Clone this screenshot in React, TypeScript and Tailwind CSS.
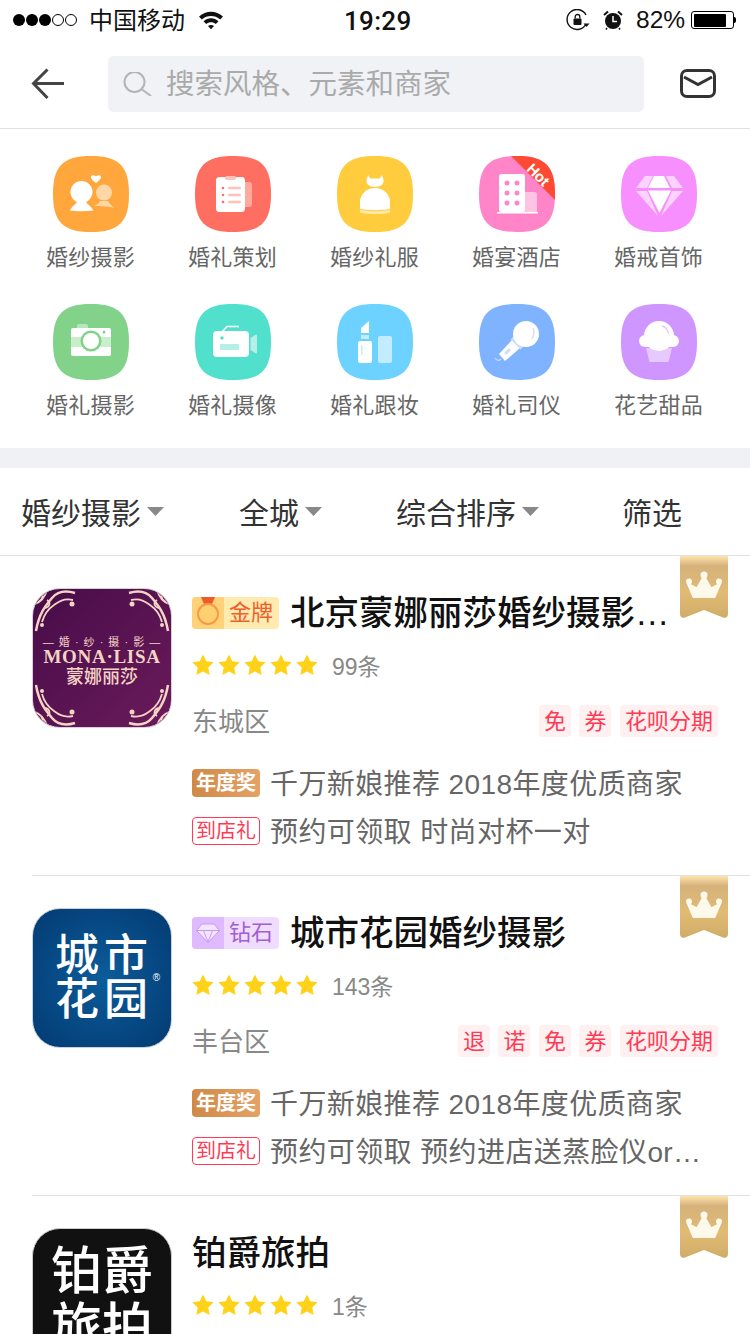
import React from "react";

const SQUIRCLE = "M38 0C66 0 76 10 76 38C76 66 66 76 38 76C10 76 0 66 0 38C0 10 10 0 38 0Z";

// Category icons
const IconShell = ({ color, children }: { color: string; children: React.ReactNode }) => (
  <svg width="76" height="76" viewBox="0 0 76 76">
    <path d={SQUIRCLE} fill={color} />
    {children}
  </svg>
);

const CoupleIcon = () => (
  <IconShell color="#ffa63d">
    <circle cx="28.5" cy="36" r="11" fill="#fff" />
    <path d="M17 54.500C19 50 23 48 25 45H32C34 48 38 50 40.500 54.500C33 55.500 24 55.500 17 54.500Z" fill="#fff" />
    <circle cx="51" cy="36.500" r="8" fill="#ffd7a6" />
    <path d="M41 50C44 49 46 47 47 45H55C56 47 58 49 61.500 52C56 50.500 50 50 41 50Z" fill="#ffd7a6" />
    <path d="M43 27C39 24 38 22.500 38 21C38 19 41 18.500 43 20.500C45 18.500 48 19 48 21C48 22.500 47 24 43 27Z" fill="#fff" />
  </IconShell>
);

const PlanIcon = () => (
  <IconShell color="#ff6f61">
    <rect x="40" y="26" width="17" height="25" rx="3" fill="#ffa99f" />
    <rect x="21" y="21" width="29" height="35" rx="3.500" fill="#fff" />
    <rect x="30" y="20" width="11" height="4" rx="2" fill="#ffc2bb" />
    {[32, 39, 46].map((y) => (
      <g key={y}>
        <circle cx="28" cy={y} r="1.300" fill="#ff6f61" />
        <rect x="33" y={y - 1.2} width="13" height="2.400" rx="1.200" fill="#ffc2bb" />
      </g>
    ))}
  </IconShell>
);

const DressIcon = () => (
  <IconShell color="#ffcc3d">
    <path d="M31 19L33.500 22.500H42.500L45 19L46.500 24C47 28 44 31 38 31C32 31 29 28 29.500 24Z" fill="#fff" />
    <path d="M23 53V46C23 38 30 32 38 32C46 32 53 38 53 46V53C45 54.500 31 54.500 23 53Z" fill="#fff" />
    <path d="M23 54C31 55.500 45 55.500 53 54V56.500C45 58.500 31 58.500 23 56.500Z" fill="#ffe9a8" />
  </IconShell>
);

const HotelIcon = () => (
  <IconShell color="#ff85c8">
    <path d="M44 36H55C57 36 58 37 58 39V56H44Z" fill="#ffc4e4" />
    <rect x="20" y="18" width="26" height="38" rx="2.500" fill="#fff" />
    {[27, 37, 47].map((y) => (
      <g key={y} fill="#ff85c8">
        <circle cx="28" cy={y} r="2.500" />
        <circle cx="38" cy={y} r="2.500" />
      </g>
    ))}
    <rect x="18" y="56" width="41" height="1.500" fill="#fff" />
    <clipPath id="hot-clip">
      <path d={SQUIRCLE} />
    </clipPath>
    <path d="M32 0H76V44Z" fill="#ff4a33" clipPath="url(#hot-clip)" />
    <text
      x="59"
      y="24"
      fill="#fff"
      fontSize="15"
      fontWeight="700"
      textAnchor="middle"
      transform="rotate(45 59 19)"
    >
      Hot
    </text>
  </IconShell>
);

const RingIcon = () => (
  <IconShell color="#f78fff">
    <path d="M33 20H43L49 32H27Z" fill="#fff" />
    <path d="M27 34.500H50L38.500 57Z" fill="#fff" />
    <path d="M15 32L24 20H32L26 32Z M62 32L53 20H45L51 32Z" fill="#fcd2ff" />
    <path d="M15 35H26L37 60Z M62 35H51L40 60Z" fill="#fcd2ff" />
  </IconShell>
);

const CameraIcon = () => (
  <IconShell color="#82d28a">
    <rect x="24" y="20" width="11" height="6" rx="2" fill="#b8e6bc" />
    <rect x="18" y="24" width="40" height="28" rx="2" fill="#fff" />
    <rect x="18" y="33" width="40" height="10" fill="#c9eecb" />
    <circle cx="38" cy="37" r="10.500" fill="#82d28a" />
    <circle cx="38" cy="37" r="8" fill="#fff" />
    <circle cx="51" cy="28" r="1.500" fill="#82d28a" />
  </IconShell>
);

const VideoIcon = () => (
  <IconShell color="#50e0cc">
    <path d="M27 28L32 22.500H44" stroke="#fff" strokeWidth="1.500" fill="none" />
    <rect x="18" y="27" width="36" height="26" rx="4" fill="#fff" />
    <path d="M55.500 34L61 30.500C61.500 30.500 62 31 62 31.500V48.500C62 49 61.500 49.500 61 49.500L55.500 46Z" fill="#b5f0e7" />
    <circle cx="27" cy="34" r="1.700" fill="#50e0cc" />
    <rect x="25" y="40" width="19" height="6" fill="#b5f0e7" />
  </IconShell>
);

const MakeupIcon = () => (
  <IconShell color="#6dd2ff">
    <path d="M24 24L32 17V29H24Z" fill="#fff" />
    <rect x="24" y="31" width="8" height="4" fill="#c4ecff" />
    <rect x="21" y="37" width="14" height="22" rx="2" fill="#fff" />
    <rect x="24" y="41" width="1.500" height="10" fill="#c4ecff" />
    <rect x="41" y="32" width="14" height="27" rx="2" fill="#c4ecff" />
  </IconShell>
);

const MicIcon = () => (
  <IconShell color="#7fb3ff">
    <path d="M33 36L41 44L26 57L20 50Z" fill="#fff" />
    <path d="M33 34L43 44" stroke="#c9deff" strokeWidth="4" />
    <path d="M30 46L27 49" stroke="#c9deff" strokeWidth="3" strokeLinecap="round" />
    <path d="M16 54C18 57 20 57 22 55" stroke="#c9deff" strokeWidth="1.200" fill="none" />
    <circle cx="47" cy="30" r="13" fill="#fff" />
    <path d="M54 24C55.500 28 55 32 53 35" stroke="#c9deff" strokeWidth="1.200" fill="none" />
  </IconShell>
);

const CakeIcon = () => (
  <IconShell color="#cf96ff">
    <path d="M25 44H51L48 56C48 57.500 47 58 46 58H30C29 58 28 57.500 28 56Z" fill="#e6c9ff" />
    <circle cx="38" cy="32" r="15" fill="#fff" />
    <circle cx="24" cy="37" r="6" fill="#fff" />
    <circle cx="52" cy="37" r="6" fill="#fff" />
    <rect x="24" y="36" width="28" height="7" rx="3" fill="#fff" />
    <path d="M41 22C45 23 47 26 47.500 30" stroke="#e6c9ff" strokeWidth="1.300" fill="none" />
  </IconShell>
);

const CATEGORIES = [
  { label: "婚纱摄影", icon: <CoupleIcon /> },
  { label: "婚礼策划", icon: <PlanIcon /> },
  { label: "婚纱礼服", icon: <DressIcon /> },
  { label: "婚宴酒店", icon: <HotelIcon /> },
  { label: "婚戒首饰", icon: <RingIcon /> },
  { label: "婚礼摄影", icon: <CameraIcon /> },
  { label: "婚礼摄像", icon: <VideoIcon /> },
  { label: "婚礼跟妆", icon: <MakeupIcon /> },
  { label: "婚礼司仪", icon: <MicIcon /> },
  { label: "花艺甜品", icon: <CakeIcon /> },
];

// Status bar
const StatusBar = () => (
  <div className="flex h-[40px] items-center text-[24px] text-[#111]">
    <div className="ml-[13px] flex w-[67px] items-center gap-[1px]">
      {[0, 1, 2].map((i) => (
        <span key={i} className="h-[12px] w-[12px] rounded-full bg-black" />
      ))}
      {[3, 4].map((i) => (
        <span key={i} className="h-[12px] w-[12px] rounded-full border border-black" />
      ))}
    </div>
    <span className="ml-[9px] w-[96px] pt-[2px] leading-none">中国移动</span>
    <svg className="ml-[14px]" width="24" height="20" viewBox="0 0 24 20">
      <path d="M0 6.500C7 0 17 0 24 6.500L21.200 9.500C16 4.900 8 4.900 2.800 9.500Z" fill="#111" />
      <path d="M4.500 11.200C9 7.300 15 7.300 19.500 11.200L16.800 14.100C14 11.700 10 11.700 7.200 14.100Z" fill="#111" />
      <path d="M9 16C11 14.500 13 14.500 15 16L12 19.200Z" fill="#111" />
    </svg>
    <span className="ml-[121px] w-[66px] pt-[2px] font-['Roboto',sans-serif] text-[26px] leading-none font-medium tracking-[0.3px]">
      19:29
    </span>
    <svg className="ml-[156px]" width="24" height="22" viewBox="0 0 24 22">
      <path d="M20 15A10 10 0 1 1 20 6" stroke="#111" strokeWidth="1.400" fill="none" />
      <path d="M17.500 14.500L23.500 14.500L20.500 18Z" fill="#111" />
      <rect x="7.500" y="9.500" width="8" height="6.500" rx="1" fill="#111" />
      <path d="M9.200 9.500V7.500C9.200 4.800 13.800 4.800 13.800 7.500V9.500" stroke="#111" strokeWidth="1.300" fill="none" />
    </svg>
    <svg className="ml-[13px]" width="20" height="20" viewBox="0 0 20 20">
      <circle cx="10" cy="11" r="8" fill="#111" />
      <path d="M10 6V11.500H14" stroke="#fff" strokeWidth="1.500" fill="none" />
      <path d="M1 5L5 1.500M19 5L15 1.500" stroke="#111" strokeWidth="2" />
      <path d="M4 18L3 19.500M16 18L17 19.500" stroke="#111" strokeWidth="1.500" />
    </svg>
    <span className="ml-[13px] w-[48px] pt-[1px] text-[24.500px] leading-none">82%</span>
    <div className="ml-[7px] flex items-center">
      <div className="h-[18px] w-[43px] rounded-[3px] border border-black p-[1.500px]">
        <div className="h-full w-[85%] rounded-[1px] bg-black" />
      </div>
      <div className="h-[6px] w-[2px] rounded-r-[2px] bg-black" />
    </div>
  </div>
);

const NavBar = () => (
  <div className="flex h-[89px] items-center border-b border-[#e2e2e2] pb-[1px]">
    <svg className="ml-[31px]" width="34" height="32" viewBox="0 0 34 32">
      <path d="M33 15.500H3M16.500 1.500L2.500 15.500L16.500 30" stroke="#444" strokeWidth="3" fill="none" />
    </svg>
    <div className="ml-[43px] flex h-[56px] w-[536px] items-center rounded-[6px] bg-[#f0f2f6]">
      <svg className="ml-[15px]" width="30" height="24" viewBox="0 0 30 24">
        <circle cx="11.500" cy="10" r="10" stroke="#b4b4b4" strokeWidth="2" fill="none" />
        <path d="M19 17.500L28 24" stroke="#b4b4b4" strokeWidth="2" />
      </svg>
      <span className="ml-[13px] pt-[2px] text-[28.500px] leading-none text-[#aaa]">搜索风格、元素和商家</span>
    </div>
    <svg className="ml-[36px]" width="36" height="29" viewBox="0 0 36 29">
      <rect x="1.500" y="1.500" width="33" height="26" rx="5.500" stroke="#333" strokeWidth="3" fill="none" />
      <path d="M4 8L18 15.500L32 8" stroke="#333" strokeWidth="3" fill="none" />
    </svg>
  </div>
);

const CategoryGrid = () => (
  <div className="grid grid-cols-[repeat(5,142px)] gap-y-[32px] pt-[27px] pb-[28px] pl-[20px]">
    {CATEGORIES.map((item) => (
      <div key={item.label} className="flex flex-col items-center">
        {item.icon}
        <span className="mt-[11px] h-[29px] pr-[1px] text-[22px] leading-[30px] tracking-[0.2px] text-[#666]">
          {item.label}
        </span>
      </div>
    ))}
  </div>
);

const Caret = () => (
  <svg className="ml-[6px]" width="17" height="9" viewBox="0 0 17 9">
    <path d="M0 0H17L8.500 9Z" fill="#888" />
  </svg>
);

const FilterBar = () => (
  <div className="flex h-[88px] items-center border-b border-[#e2e2e2] text-[30px] text-[#333]">
    <div className="ml-[21px] flex w-[218px] items-center">
      <span className="pt-[3px]">婚纱摄影</span>
      <Caret />
    </div>
    <div className="flex w-[157px] items-center">
      <span className="pt-[3px]">全城</span>
      <Caret />
    </div>
    <div className="flex w-[226px] items-center">
      <span className="pt-[3px]">综合排序</span>
      <Caret />
    </div>
    <div className="pt-[3px]">筛选</div>
  </div>
);

const Star = () => (
  <svg width="22" height="22" viewBox="0 0 22 22">
    <path
      d="M11 0.500L14.300 7.300L21.700 8.300L16.300 13.500L17.600 21L11 17.400L4.400 21L5.700 13.500L0.300 8.300L7.700 7.300Z"
      fill="#ffd21a"
    />
  </svg>
);

const Ribbon = () => (
  <svg className="absolute top-0 right-[22px]" width="48" height="63" viewBox="0 0 48 63">
    <defs>
      <linearGradient id="ribbon-fill" x1="0" y1="0" x2="0" y2="1">
        <stop offset="0" stopColor="#ffe3ad" />
        <stop offset="0.16" stopColor="#d5b27a" />
        <stop offset="0.6" stopColor="#e0bb74" />
        <stop offset="1" stopColor="#d1ac68" />
      </linearGradient>
    </defs>
    <path d="M0 0H48V58C48 61 46 62.500 43 61.500L24 54L5 61.500C2 62.500 0 61 0 58Z" fill="url(#ribbon-fill)" />
    <path d="M13.500 41L8 28L17 32.500L24 20L31 32.500L40 28L34.500 41Z" fill="#fff9ec" stroke="#fff9ec" strokeWidth="2" strokeLinejoin="round" />
    <circle cx="24" cy="19" r="3.500" fill="#fff9ec" />
    <circle cx="9" cy="25.500" r="3" fill="#fff9ec" />
    <circle cx="39" cy="25.500" r="3" fill="#fff9ec" />
  </svg>
);

const GoldBadge = () => (
  <div className="mr-[11px] flex h-[32px] w-[87px] overflow-hidden rounded-[4px] bg-[#ffeab0]">
    <div className="w-[32px] bg-[#ffd27a]">
      <svg width="32" height="32" viewBox="0 0 32 32">
        <path d="M9 0H23L20 7H12Z" fill="#ee5b2a" />
        <circle cx="16" cy="17" r="11" fill="#f59a45" />
        <circle cx="16" cy="17" r="9" fill="#ffd070" />
      </svg>
    </div>
    <span className="ml-[5px] text-[22px] leading-[32px] text-[#ee5f2b]">金牌</span>
  </div>
);

const DiamondBadge = () => (
  <div className="mr-[11px] flex h-[32px] w-[87px] overflow-hidden rounded-[4px] bg-[#efdcff]">
    <div className="flex w-[32px] items-center justify-center bg-[#dfbaff]">
      <svg width="24" height="20" viewBox="0 0 24 20">
        <path d="M6 1H18L23.500 7.500L12 19.500L0.500 7.500Z" fill="#f3e4ff" stroke="#c79bf0" strokeWidth="1" />
        <path d="M1 7.500H23M7.500 7.500L12 19M16.500 7.500L12 19" stroke="#c79bf0" strokeWidth="1" fill="none" />
      </svg>
    </div>
    <span className="ml-[5px] text-[22px] leading-[32px] text-[#a25fd2]">钻石</span>
  </div>
);

const CornerCurl = ({ className }: { className: string }) => (
  <svg className={`absolute ${className}`} width="44" height="44" viewBox="0 0 44 44">
    <path
      d="M42 4C32 1 24 3 19 9C13 16 6 24 3 42"
      stroke="#f3d3c4"
      strokeWidth="2.500"
      fill="none"
    />
    <path
      d="M40 11C30 9 25 13 21 16C15 20 11 26 9 33M2 15C8 13 12 8 14 1M7 2C11 6 10 11 5 13M14 11C18 13 17 18 12 19"
      stroke="#f3d3c4"
      strokeWidth="1.800"
      fill="none"
    />
    <circle cx="39" cy="15" r="2.500" fill="#f3d3c4" />
    <circle cx="9" cy="36" r="2" fill="#f3d3c4" />
  </svg>
);

const MonaLisaLogo = () => (
  <div className="relative flex h-[140px] w-[140px] shrink-0 flex-col items-center overflow-hidden rounded-[28px] border border-[#d8d0d8] bg-linear-to-br from-[#470c49] to-[#6b1a5a] pt-[46px] text-[#f3d3c4]">
    <CornerCurl className="top-0 left-0" />
    <CornerCurl className="top-0 right-0 -scale-x-100" />
    <CornerCurl className="bottom-0 left-0 -scale-y-100" />
    <CornerCurl className="right-0 bottom-0 -scale-100" />
    <span className="text-[11px] leading-[14px] tracking-[1px]">— 婚 · 纱 · 摄 · 影 —</span>
    <span className="font-['Liberation_Serif',serif] text-[19px] leading-[16px] font-bold tracking-[0.7px] whitespace-nowrap">
      MONA·LISA
    </span>
    <span className="text-[18px] leading-[24px] font-medium">蒙娜丽莎</span>
  </div>
);

const CityGardenLogo = () => (
  <div className="relative flex h-[140px] w-[140px] shrink-0 flex-col items-center overflow-hidden rounded-[28px] border border-[#c8d2dc] bg-radial from-[#0c5c9a] to-[#043a72] pt-[25px] pl-[4px] text-[44px] leading-[44px] font-medium tracking-[5px] text-white">
    <span>城市</span>
    <span>花园</span>
    <span className="absolute top-[64px] right-[11px] text-[10px] leading-none tracking-normal">®</span>
  </div>
);

const BojueLogo = () => (
  <div className="flex h-[140px] w-[140px] shrink-0 flex-col items-center rounded-[28px] border border-[#ccc] bg-[#111] pt-[15px] text-[51px] leading-[56px] font-medium text-white">
    <span>铂爵</span>
    <span>旅拍</span>
  </div>
);

type Shop = {
  logo: React.ReactNode;
  badge?: React.ReactNode;
  name: string;
  count: string;
  area: string;
  tags: string[];
  gift: string;
};

const SHOPS: Shop[] = [
  {
    logo: <MonaLisaLogo />,
    badge: <GoldBadge />,
    name: "北京蒙娜丽莎婚纱摄影…",
    count: "99条",
    area: "东城区",
    tags: ["免", "券", "花呗分期"],
    gift: "预约可领取 时尚对杯一对",
  },
  {
    logo: <CityGardenLogo />,
    badge: <DiamondBadge />,
    name: "城市花园婚纱摄影",
    count: "143条",
    area: "丰台区",
    tags: ["退", "诺", "免", "券", "花呗分期"],
    gift: "预约可领取 预约进店送蒸脸仪or…",
  },
];

const ShopCard = ({ shop }: { shop: Shop }) => (
  <div className="relative ml-[32px] flex h-[320px] gap-[20px] border-b border-[#e2e2e2] pt-[32px]">
    {shop.logo}
    <div className="min-w-0 flex-1 pr-[32px]">
      <div className="flex h-[50px] items-center">
        {shop.badge}
        <span className="text-[34.500px] leading-none font-medium whitespace-nowrap text-[#111]">{shop.name}</span>
      </div>
      <div className="mt-[14px] flex h-[26px] items-center">
        <div className="flex gap-[4px]">
          {[0, 1, 2, 3, 4].map((i) => (
            <Star key={i} />
          ))}
        </div>
        <span className="ml-[14px] pt-[4px] text-[23px] leading-none text-[#888]">{shop.count}</span>
      </div>
      <div className="mt-[27px] flex h-[32px] items-center justify-between">
        <span className="pt-[1px] text-[26px] leading-none text-[#888]">{shop.area}</span>
        <div className="flex gap-[8.500px]">
          {shop.tags.map((tag) => (
            <span
              key={tag}
              className="h-[32px] rounded-[4px] bg-[#fff0f2] px-[5px] text-[22px] leading-[34px] text-[#ff3a52]"
            >
              {tag}
            </span>
          ))}
        </div>
      </div>
      <div className="mt-[32px] flex h-[28px] items-center">
        <span className="flex h-[28px] w-[68px] items-center justify-center rounded-[4px] bg-linear-to-r from-[#cf8a47] to-[#e6a266] text-[20px] leading-none font-bold text-white">
          年度奖
        </span>
        <span className="ml-[10px] pt-[4px] text-[28px] leading-none tracking-[0.4px] whitespace-nowrap text-[#666]">
          千万新娘推荐 2018年度优质商家
        </span>
      </div>
      <div className="mt-[20px] flex h-[28px] items-center">
        <span className="flex h-[28px] w-[68px] items-center justify-center rounded-[4px] border border-[#ff3a52] text-[20px] leading-none text-[#ff3a52]">
          到店礼
        </span>
        <span className="ml-[10px] pt-[4px] text-[28px] leading-none tracking-[0.4px] whitespace-nowrap text-[#666]">
          {shop.gift}
        </span>
      </div>
    </div>
    <Ribbon />
  </div>
);

const LastCard = () => (
  <div className="relative ml-[32px] flex gap-[20px] pt-[32px]">
    <BojueLogo />
    <div className="min-w-0 flex-1">
      <div className="flex h-[50px] items-center">
        <span className="text-[34.500px] leading-none font-medium text-[#111]">铂爵旅拍</span>
      </div>
      <div className="mt-[14px] flex h-[26px] items-center">
        <div className="flex gap-[4px]">
          {[0, 1, 2, 3, 4].map((i) => (
            <Star key={i} />
          ))}
        </div>
        <span className="ml-[14px] pt-[4px] text-[23px] leading-none text-[#888]">1条</span>
      </div>
    </div>
    <Ribbon />
  </div>
);

const App = () => {
  return (
    <div className="h-[1334px] w-[750px] overflow-hidden bg-white font-['Liberation_Sans','Noto_Sans_CJK_SC',sans-serif]">
      <StatusBar />
      <NavBar />
      <CategoryGrid />
      <div className="h-[20px] bg-[#f0f1f5]" />
      <FilterBar />
      {SHOPS.map((shop) => (
        <ShopCard key={shop.name} shop={shop} />
      ))}
      <LastCard />
    </div>
  );
};

export default App;
